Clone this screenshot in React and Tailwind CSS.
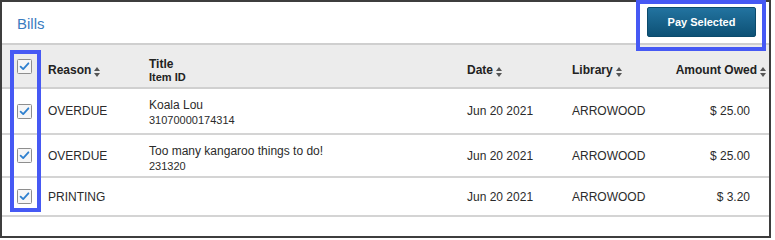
import React from "react";

const font = { fontFamily: '"Liberation Sans", Arial, sans-serif' };

function Check() {
  return (
    <svg width="15" height="15" viewBox="0 0 15 15" className="block">
      <rect x="0.5" y="0.5" width="14" height="14" rx="1" fill="#f6f6f6" stroke="#8e8e8e" />
      <path d="M3.6 7.6 L6.2 10.1 L11.4 4.3" fill="none" stroke="#2f80cf" strokeWidth="1.8" strokeLinecap="round" strokeLinejoin="round" />
    </svg>
  );
}

function Sort() {
  return (
    <svg width="6" height="10" viewBox="0 0 6 10" className="ml-[3px] inline-block shrink-0">
      <polygon points="0,4 3,0 6,4" fill="#555" />
      <polygon points="0,6 3,10 6,6" fill="#555" />
    </svg>
  );
}

const rows = [
  { reason: "OVERDUE", title: "Koala Lou", id: "31070000174314", date: "Jun 20 2021", lib: "ARROWOOD", amt: "$ 25.00", h: "h-[44px]" },
  { reason: "OVERDUE", title: "Too many kangaroo things to do!", id: "231320", date: "Jun 20 2021", lib: "ARROWOOD", amt: "$ 25.00", h: "h-[41px]" },
  { reason: "PRINTING", title: "", id: "", date: "Jun 20 2021", lib: "ARROWOOD", amt: "$ 3.20", h: "h-[37px]" },
];

const grid = "grid grid-cols-[38px_101px_318px_105px_104px_1fr]";

export default function App() {
  return (
    <div style={font} className="relative w-[771px] h-[238px] bg-white">
      <div className="w-[771px] h-[238px] border-2 border-[#3d3d3d] flex flex-col">
        <div className="h-[41px] flex items-start justify-between">
          <div className="pl-[15px] pt-[13px] text-[15px] leading-[18px] text-[#3a7cc0]">Bills</div>
          <button className="mt-[5px] mr-[13px] w-[109px] h-[30px] rounded-[2px] border border-[#0b4a6b] bg-gradient-to-b from-[#2273a0] to-[#0d5175] text-white text-[11px] font-bold">
            Pay Selected
          </button>
        </div>
        <div className="border-t-2 border-[#cfcfcf]">
          <div className={`${grid} h-[44px] bg-[#ececec] border-b-2 border-[#d0d0d0] text-[12px] font-bold text-[#222]`}>
            <div className="flex items-center pl-[15px]"><Check /></div>
            <div className="flex items-end pl-2 pb-[10px] leading-[14px]"><span>Reason</span><Sort /></div>
            <div className="flex items-end pl-2 pb-[3px]">
              <div>
                <div className="leading-[13px]">Title</div>
                <div className="leading-[13px] text-[11px]">Item ID</div>
              </div>
            </div>
            <div className="flex items-end pl-2 pb-[10px] leading-[14px]"><span>Date</span><Sort /></div>
            <div className="flex items-end pl-2 pb-[10px] leading-[14px]"><span>Library</span><Sort /></div>
            <div className="flex items-end justify-end pr-[3px] pb-[10px] leading-[14px]"><span>Amount Owed</span><Sort /></div>
          </div>
          {rows.map((r, i) => (
            <div key={i} className={`${grid} ${r.h} box-content border-b-2 border-[#d4d4d4] text-[12px] text-[#2b2b2b] leading-[14px]`}>
              <div className="flex items-center pl-[15px]"><Check /></div>
              <div className="flex items-center pl-2">{r.reason}</div>
              <div className="pl-2 pt-[9px]">
                {r.title && <div className="leading-[15px]">{r.title}</div>}
                {r.id && <div className="leading-[15px] text-[11px]">{r.id}</div>}
              </div>
              <div className="flex items-center pl-2">{r.date}</div>
              <div className="flex items-center pl-2">{r.lib}</div>
              <div className="flex items-center justify-end pr-[19px]">{r.amt}</div>
            </div>
          ))}
        </div>
      </div>
      <div className="absolute left-[636px] top-0 w-[130px] h-[51px] border-4 border-[#4659f4]" />
      <div className="absolute left-[10px] top-[50px] w-[31px] h-[162px] border-4 border-[#4659f4]" />
    </div>
  );
}
